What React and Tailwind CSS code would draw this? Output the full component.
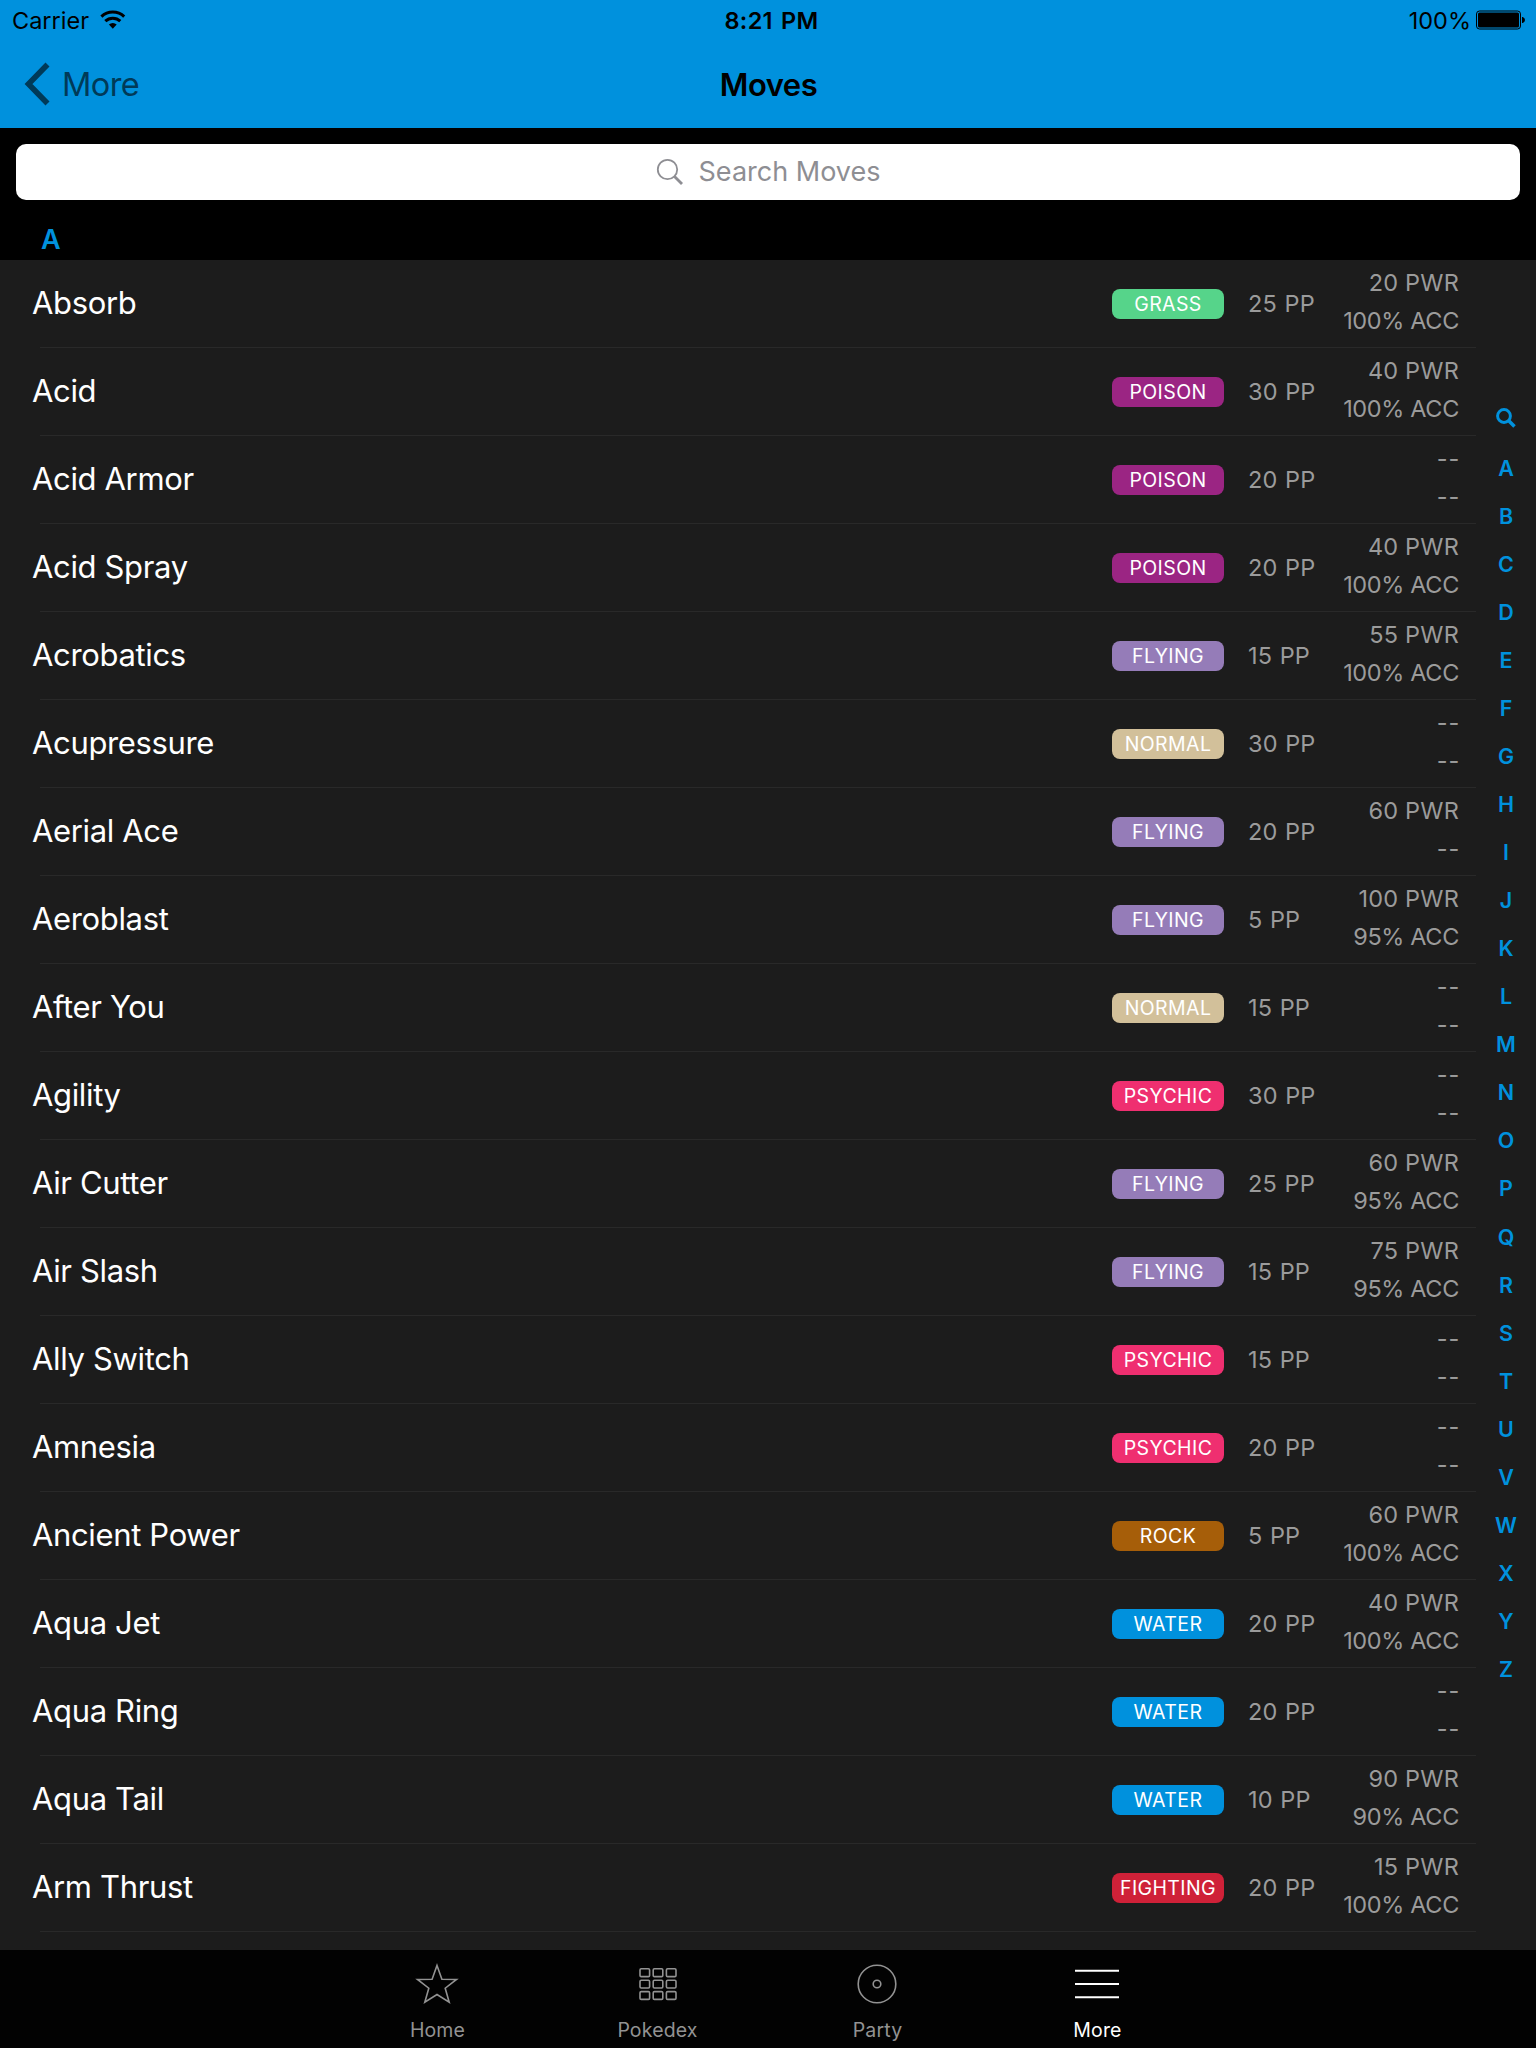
import React from "react";

const TYPES = {
  GRASS: "bg-[#56d48a]",
  POISON: "bg-[#9b2583]",
  FLYING: "bg-[#957cb8]",
  NORMAL: "bg-[#d2c09a]",
  PSYCHIC: "bg-[#ef2f70]",
  ROCK: "bg-[#a65e09]",
  WATER: "bg-[#0091dd]",
  FIGHTING: "bg-[#cf2138]",
};

const MOVES = [
  ["Absorb", "GRASS", 25, "20 PWR", "100% ACC"],
  ["Acid", "POISON", 30, "40 PWR", "100% ACC"],
  ["Acid Armor", "POISON", 20, "--", "--"],
  ["Acid Spray", "POISON", 20, "40 PWR", "100% ACC"],
  ["Acrobatics", "FLYING", 15, "55 PWR", "100% ACC"],
  ["Acupressure", "NORMAL", 30, "--", "--"],
  ["Aerial Ace", "FLYING", 20, "60 PWR", "--"],
  ["Aeroblast", "FLYING", 5, "100 PWR", "95% ACC"],
  ["After You", "NORMAL", 15, "--", "--"],
  ["Agility", "PSYCHIC", 30, "--", "--"],
  ["Air Cutter", "FLYING", 25, "60 PWR", "95% ACC"],
  ["Air Slash", "FLYING", 15, "75 PWR", "95% ACC"],
  ["Ally Switch", "PSYCHIC", 15, "--", "--"],
  ["Amnesia", "PSYCHIC", 20, "--", "--"],
  ["Ancient Power", "ROCK", 5, "60 PWR", "100% ACC"],
  ["Aqua Jet", "WATER", 20, "40 PWR", "100% ACC"],
  ["Aqua Ring", "WATER", 20, "--", "--"],
  ["Aqua Tail", "WATER", 10, "90 PWR", "90% ACC"],
  ["Arm Thrust", "FIGHTING", 20, "15 PWR", "100% ACC"],
];

const LETTERS = "ABCDEFGHIJKLMNOPQRSTUVWXYZ".split("");

function Header() {
  return (
    <header className="h-32 shrink-0 bg-[#0091dd] text-black">
      <div className="grid h-10 grid-cols-3 items-center pr-[10px] pl-[12px] text-[23.5px] leading-[38px]">
        <div className="flex items-center gap-[11px]">
          <span className="pt-[2px]">Carrier</span>
          <svg width="26" height="20" viewBox="0 0 26 20" fill="none" stroke="#000" strokeWidth="3">
            <path d="M1.4 6.6a16.4 16.4 0 0 1 22.8 0" />
            <path d="M5.3 11.2a10.8 10.8 0 0 1 15 0" />
            <path d="M8.9 14.6a5.6 5.6 0 0 1 7.8 0L12.8 18.8z" fill="#000" stroke="none" />
          </svg>
        </div>
        <div className="pt-[2px] pl-[5px] text-center font-semibold tracking-[0.3px] [word-spacing:2px]">8:21 PM</div>
        <div className="flex items-center justify-end gap-[5px]">
          <span className="pt-[2px]">100%</span>
          <svg width="50" height="20" viewBox="0 0 50 20">
            <rect x="0.5" y="1" width="44" height="18" rx="3" fill="none" stroke="#000" />
            <rect x="2" y="2.5" width="41" height="15" rx="1.5" />
            <path d="M46 7h.8q2.2 1 2.2 3t-2.2 3H46z" />
          </svg>
        </div>
      </div>
      <div className="grid h-[88px] grid-cols-3 items-center pr-[24px] pl-[24px] text-[32.5px] leading-[86px]">
        <div className="flex items-center gap-[12px] text-[#003a58]">
          <svg width="26" height="44" viewBox="0 0 26 44" fill="none" stroke="currentColor" strokeWidth="5.6">
            <path d="M23.5 2.5L4.5 22L23.5 41.5" />
          </svg>
          <span className="pt-[2px] tracking-[-0.6px]">More</span>
        </div>
        <div className="pt-[2px] pl-[1px] text-center text-[31px] font-semibold tracking-[-0.5px]">Moves</div>
      </div>
    </header>
  );
}

function MoveRow({ move }) {
  const [name, type, pp, power, accuracy] = move;
  return (
    <li className="relative flex h-[88px] shrink-0 items-center pr-[17px] pl-8 after:absolute after:right-0 after:bottom-0 after:left-10 after:h-px after:bg-[#292929]">
      <span className="flex-1 pb-[2px] text-[31px] tracking-[-0.35px] text-white">{name}</span>
      <span className={"flex h-[30px] w-28 items-center justify-center rounded-[8px] pt-[1px] text-[19.5px] leading-[29px] tracking-[0.4px] text-white " + TYPES[type]}>{type}</span>
      <span className="ml-6 w-[88px] text-[23.5px] tracking-[0.2px] text-[#9b9b9b] [word-spacing:0.6px]">{pp} PP</span>
      <span className="w-[123px] pb-[4px] text-right text-[23.5px] leading-[38px] text-[#9b9b9b]">
        <span className={power === "--" ? "-mr-px block tracking-[0.8px]" : "block tracking-[0.2px]"}>{power}</span>
        <span className={accuracy === "--" ? "-mr-px block tracking-[0.8px]" : "block tracking-[-0.35px]"}>{accuracy}</span>
      </span>
    </li>
  );
}

function Tab({ label, active, children }) {
  return (
    <div className={"flex w-[220px] flex-col items-center pt-[9px] " + (active ? "text-white" : "text-[#929292]")}>
      <svg width="48" height="50" viewBox="0 0 48 50" fill="none" stroke="currentColor" strokeWidth="1.6">
        {children}
      </svg>
      <span className="mt-[9px] pl-px text-[19.5px] leading-6 tracking-[0.15px]">{label}</span>
    </div>
  );
}

export default function App() {
  return (
    <div className="flex h-[2048px] w-[1536px] flex-col overflow-hidden bg-black font-['Inter',sans-serif] font-[370]">
      <Header />
      <div className="px-4 pt-4">
        <div className="flex h-14 items-center justify-center gap-[15px] rounded-[10px] bg-white text-[27px] text-[#8e8e93]">
          <svg width="28" height="28" viewBox="0 0 28 28" fill="none" stroke="currentColor">
            <circle cx="11.5" cy="11.5" r="9.7" strokeWidth="1.8" />
            <path d="M18.5 18.5L26 26" strokeWidth="2.8" />
          </svg>
          <span>Search Moves</span>
        </div>
      </div>
      <div className="h-[60px] shrink-0 pt-[20px] pl-[41px] text-[27px] leading-[40px] font-semibold text-[#0091dd]">A</div>
      <main className="flex h-[1690px] shrink-0 overflow-hidden bg-[#1c1c1c]">
        <ul className="flex w-[1476px] flex-col">
          {MOVES.map((m) => (
            <MoveRow key={m[0]} move={m} />
          ))}
        </ul>
        <nav className="flex flex-1 flex-col items-center pt-[134px] text-[21.5px] font-semibold text-[#0091dd]">
          <div className="flex h-[50px] w-full justify-center pt-[14px]">
            <svg width="20" height="20" viewBox="0 0 20 20" fill="none" stroke="currentColor">
              <circle cx="8" cy="8" r="6.4" strokeWidth="3" />
              <path d="M12.5 12.5L18.5 18.5" strokeWidth="3.6" />
            </svg>
          </div>
          {LETTERS.map((l) => (
            <span key={l} className="h-[48.04px] leading-[48px]">{l}</span>
          ))}
        </nav>
      </main>
      <footer className="flex h-[98px] shrink-0 bg-[#020202] pl-[327px]">
        <Tab label="Home">
          <path d="M24 6.5L28.9 20.2L43.5 20.5L32.2 29.2L36.2 43.2L24 35.5L11.8 43.2L15.8 29.2L4.5 20.5L19.1 20.2Z" />
        </Tab>
        <Tab label="Pokedex">
          {[9.8, 21.2, 32.6].map((y) =>
            [7, 20.2, 33.4].map((x) => <rect key={x + "-" + y} x={x} y={y} width="9.6" height="7.8" rx="1.2" />)
          )}
        </Tab>
        <Tab label="Party">
          <circle cx="24" cy="25" r="18.8" />
          <circle cx="24" cy="25" r="3.8" />
        </Tab>
        <Tab label="More" active>
          <path d="M2 11.7H46M2 25H46M2 38.3H46" strokeWidth="2" />
        </Tab>
      </footer>
    </div>
  );
}
